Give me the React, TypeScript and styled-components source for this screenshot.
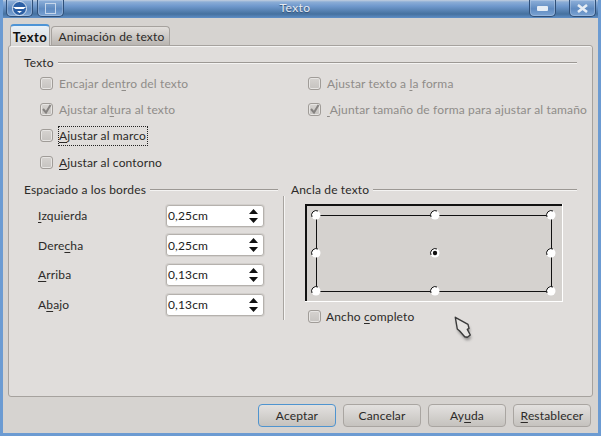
import React from "react";
import styled, { createGlobalStyle } from "styled-components";

const Global = createGlobalStyle`
  html, body { margin: 0; padding: 0; background: #d6d3d0; }
  * { box-sizing: border-box; }
`;

const Window = styled.div`
  width: 601px; height: 436px; display: flex; flex-direction: column; position: relative; overflow: hidden;
  font-family: "Lato", "Liberation Sans", sans-serif; font-size: 12px; letter-spacing: 0.15px; color: #2c2a28;
  background: #d6d3d0;
  border-left: 3px solid #6c9bd2; border-right: 3px solid #6c9bd2; border-bottom: 3px solid #6c9bd2;
`;
const TitleBar = styled.div`
  height: 18px; margin: 0 -3px; flex: none; display: flex; align-items: flex-start; padding: 0 5px 0 6px; gap: 4px;
  background: linear-gradient(#c3cfdf 0, #8badd6 2px, #7099cd 6px, #45719f 14px, #5f8fc6 18px);
`;
const TitleButton = styled.div`
  width: 27px; height: 17px; display: flex; align-items: center; justify-content: center;
  border: 1px solid #2f4f78; border-top: none; border-radius: 0 0 5px 5px;
  background: linear-gradient(#8fb1da, #5f8ac0 55%, #7aa3d3);
  box-shadow: inset 0 0 0 1px rgba(255,255,255,.22);
`;
const Title = styled.div`
  flex: 1; text-align: center; font-size: 12px; line-height: 16px; color: #e6ebf2; letter-spacing: .4px;
  text-shadow: 0 1px 1px #2d4a70; padding-right: 3px;
`;
const Spacer = styled.div` width: 5px; flex: none; `;
const Body = styled.div`
  flex: 1; display: flex; flex-direction: column; padding: 5px 5px 0 5px; min-height: 0;
`;
const Tabs = styled.div` height: 22px; flex: none; display: flex; align-items: flex-end; padding-left: 2px; gap: 1px; `;
const Tab = styled.div<{ $active?: boolean }>`
  height: ${p => (p.$active ? 22 : 19)}px; position: relative; z-index: ${p => (p.$active ? 2 : 1)};
  width: ${p => (p.$active ? 40 : 119)}px; text-align: center; white-space: nowrap;
  font-weight: ${p => (p.$active ? 700 : 400)};
  font-size: ${p => (p.$active ? 13 : 12)}px;
  letter-spacing: ${p => (p.$active ? 0.5 : 0.2)}px;
  padding-left: ${p => (p.$active ? 0 : 2)}px;
  line-height: ${p => (p.$active ? 23 : 19)}px; margin-bottom: ${p => (p.$active ? -1 : 0)}px;
  color: ${p => (p.$active ? "#111" : "#2c2a28")};
  border: 1px solid #a6a29e; border-bottom: none; border-radius: 4px 4px 0 0;
  border-top-color: ${p => (p.$active ? "#4d94d6" : "#a6a29e")};
  border-top-width: ${p => (p.$active ? 2 : 1)}px;
  background: ${p => p.$active
    ? "linear-gradient(#e9f1f8, #d8d6d4)"
    : "linear-gradient(#e2dfdc, #b9b5b1)"};
`;
const Panel = styled.div`
  width: 585px; height: 352px; flex: none; padding: 9px 15px 0; display: flex; flex-direction: column;
  background: #e0dddb; border: 1px solid #a6a29e; border-radius: 3px; box-shadow: inset 0 1px 0 #f5f4f3;
`;
const Header = styled.div`
  height: 16px; display: flex; align-items: center; gap: 4px; line-height: 16px; white-space: nowrap;
  &::after { content: ""; flex: 1; height: 2px; background: linear-gradient(#9c9894 50%, #f4f3f2 50%); }
`;
const CheckGrid = styled.div`
  display: grid; grid-template-columns: 268px 1fr; grid-auto-rows: 26.4px; margin-top: -1px; padding-left: 16px; align-items: center;
`;
const Check = styled.div<{ $muted?: boolean }>`
  display: flex; align-items: center; gap: 6px; white-space: nowrap; height: 20px;
  color: ${p => (p.$muted ? "#8f8c89" : "#2c2a28")};
`;
const Box = styled.div`
  width: 13px; height: 13px; flex: none; border: 1px solid #a09c98; border-radius: 3px;
  background: linear-gradient(#d6d3d0, #c6c3c0);
  box-shadow: inset 0 0 0 1px #e7e5e3;
  display: flex; align-items: center; justify-content: center;
`;
const Focus = styled.span`
  outline: 1px dotted #222; outline-offset: 0; padding: 0 1px 0 0; line-height: 18px;
`;
const U = styled.span` text-decoration: underline; text-underline-offset: 2px; `;
const Columns = styled.div` display: flex; margin-top: 6px; `;
const LeftGroup = styled.div` width: 254px; flex: none; display: flex; flex-direction: column; `;
const Fields = styled.div` display: flex; flex-direction: column; gap: 7.7px; padding: 7px 0 0 14px; `;
const Field = styled.div` display: flex; align-items: center; height: 22px; `;
const FieldLabel = styled.div` width: 128px; flex: none; `;
const Spin = styled.div`
  width: 98px; height: 22px; display: flex; align-items: center; justify-content: space-between;
  padding: 0 5px 0 1px; background: #fff; border: 1px solid #b5b1ad; border-radius: 3px;
  box-shadow: 0 0 0 1px #d2cfcc; color: #222;
`;
const Arrows = styled.svg` width: 9px; height: 14px; flex: none; `;
const Divider = styled.div`
  width: 2px; height: 124px; flex: none; margin: 14px 0 0 5px;
  background: linear-gradient(90deg, #a8a4a0 50%, #f5f4f3 50%);
`;
const RightGroup = styled.div` flex: 1; min-width: 0; display: flex; flex-direction: column; margin-left: -1px; `;
const RightHeader = styled(Header)` margin-left: 7px; `;
const Preview = styled.svg` width: 258px; height: 98px; margin: 6px 0 0 21px; display: block; flex: none; `;
const AnchorCheck = styled(Check)` margin: 5px 0 0 24px; gap: 5px; `;
const Cursor = styled.svg` position: absolute; left: 448px; top: 316px; width: 26px; height: 28px; `;
const Footer = styled.div` display: flex; justify-content: flex-end; gap: 7px; padding: 7px 2px 0 0; `;
const Button = styled.div<{ $primary?: boolean; $w: number }>`
  width: ${p => p.$w}px; height: 23px; text-align: center; line-height: 21px;
  border: 1px solid ${p => (p.$primary ? "#4f94cf" : "#a9a5a1")}; border-radius: 4px;
  background: linear-gradient(#e3e1df, #c5c2be);
`;

const Tick = () => (
  <svg width="11" height="11" viewBox="0 0 11 11"><path d="M2 5l3 3.5L9.5 1" fill="none" stroke="#858280" strokeWidth="2" /></svg>
);
const Spinner = ({ value }: { value: string }) => (
  <Spin>{value}
    <Arrows viewBox="0 0 9 14"><path d="M4.5 0L9 5H0zM4.5 14L9 9H0z" fill="#111" /></Arrows>
  </Spin>
);
const pts: [number, number][] = [[11,11],[130,11],[246,11],[11,49],[246,49],[11,87],[130,87],[246,87]];
const hand = "M4.3 1.3L17 8.3L18 12.3L16.3 13.3L19.3 19L16.3 21.3L13.7 20.7L8.7 15L6.3 13Z";

export default function App() {
  return (
    <>
      <Global />
      <Window>
        <TitleBar>
          <TitleButton>
            <svg width="17" height="15" viewBox="0 0 17 15">
              <circle cx="8.5" cy="7.5" r="7" fill="#2b5fa5" stroke="#dfe8f3" />
              <path d="M2 6h13l-2.5 2h-8zM6 10h5l-2.5 2z" fill="#fff" />
            </svg>
          </TitleButton>
          <TitleButton>
            <svg width="11" height="11" viewBox="0 0 11 11"><rect x=".5" y=".5" width="10" height="10" fill="none" stroke="#c6d6ea" /></svg>
          </TitleButton>
          <Title>Texto</Title>
          <TitleButton>
            <svg width="11" height="5" viewBox="0 0 11 5"><rect width="11" height="5" rx="1" fill="#e6edf5" /></svg>
          </TitleButton>
          <Spacer />
          <TitleButton>
            <svg width="11" height="9" viewBox="0 0 11 9"><path d="M1 1l9 7M10 1L1 8" stroke="#e6edf5" strokeWidth="2.6" /></svg>
          </TitleButton>
        </TitleBar>
        <Body>
          <Tabs>
            <Tab $active>Texto</Tab>
            <Tab>Animación de texto</Tab>
          </Tabs>
          <Panel>
            <Header>Texto</Header>
            <CheckGrid>
              <Check $muted><Box /><span>Encajar den<U>t</U>ro del texto</span></Check>
              <Check $muted><Box /><span>Ajustar texto a <U>l</U>a forma</span></Check>
              <Check $muted><Box><Tick /></Box><span>Ajustar al<U>t</U>ura al texto</span></Check>
              <Check $muted><Box><Tick /></Box><span><U>&nbsp;</U>Ajuntar tamaño de forma para ajustar al tamaño</span></Check>
              <Check><Box /><Focus><U>A</U>justar al marco</Focus></Check>
              <span />
              <Check><Box /><span><U>A</U>justar al contorno</span></Check>
            </CheckGrid>
            <Columns>
              <LeftGroup>
                <Header>Espaciado a los bordes</Header>
                <Fields>
                  <Field><FieldLabel><U>I</U>zquierda</FieldLabel><Spinner value="0,25cm" /></Field>
                  <Field><FieldLabel>Dere<U>c</U>ha</FieldLabel><Spinner value="0,25cm" /></Field>
                  <Field><FieldLabel><U>A</U>rriba</FieldLabel><Spinner value="0,13cm" /></Field>
                  <Field><FieldLabel>A<U>b</U>ajo</FieldLabel><Spinner value="0,13cm" /></Field>
                </Fields>
              </LeftGroup>
              <Divider />
              <RightGroup>
                <RightHeader>Ancla de texto</RightHeader>
                <Preview viewBox="0 0 258 98">
                  <rect width="258" height="98" fill="#d5d2cf" />
                  <path d="M0 97.5H258M257.5 0V98" stroke="#fff" />
                  <path d="M0 1H257M1 0V97" stroke="#111" strokeWidth="2" />
                  <rect x="11.5" y="11.5" width="235" height="76" fill="none" stroke="#111" />
                  {pts.map(([x, y]) => (
                    <g key={`${x}-${y}`}>
                      <circle cx={x} cy={y} r="4.5" fill="#fff" />
                      <path d={`M${x - 4} ${y + 2}A4.5 4.5 0 0 1 ${x + 2} ${y - 4}`} fill="none" stroke="#111" />
                    </g>
                  ))}
                  <circle cx="130" cy="49" r="4.5" fill="#fff" />
                  <path d="M126 51A4.5 4.5 0 0 1 132 45" fill="none" stroke="#111" />
                  <circle cx="130" cy="49" r="2.2" fill="#111" />
                </Preview>
                <AnchorCheck><Box /><span>Ancho <U>c</U>ompleto</span></AnchorCheck>
              </RightGroup>
            </Columns>
          </Panel>
          <Footer>
            <Button $primary $w={78}>Aceptar</Button>
            <Button $w={78}>Cancelar</Button>
            <Button $w={78}>Ay<U>u</U>da</Button>
            <Button $w={78}><U>R</U>establecer</Button>
          </Footer>
        </Body>
        <Cursor viewBox="0 0 26 28">
          <defs><filter id="s" x="-30%" y="-30%" width="160%" height="160%"><feGaussianBlur stdDeviation="1.6" /></filter></defs>
          <path d={hand} fill="#444" opacity=".55" filter="url(#s)" transform="translate(1 3)" />
          <path d={hand} fill="#e6e4e2" stroke="#3a3a3a" strokeWidth="1.4" strokeLinejoin="round" />
        </Cursor>
      </Window>
    </>
  );
}
